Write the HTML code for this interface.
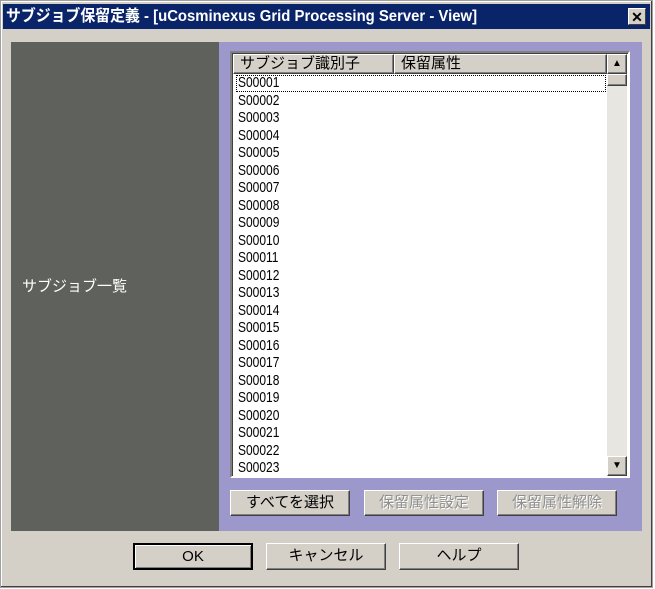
<!DOCTYPE html>
<html><head><meta charset="utf-8"><style>
*{box-sizing:border-box;margin:0;padding:0}
body{width:655px;height:589px;background:#fff;font-family:"Liberation Sans","Noto Sans CJK JP",sans-serif;position:relative;overflow:hidden}
.abs{position:absolute}
.win{left:0;top:0;width:653px;height:588px;background:#d4d0c8;border:1px solid #a0a0a0;box-shadow:inset -1px -1px #404040,inset 1px 1px #fff}
.title{left:3px;top:4px;width:647px;height:25px;background:#0a246a;color:#fff;font-weight:bold;font-size:16px;line-height:25px;padding-left:3px;white-space:nowrap}
.tt{display:inline-block;transform:scaleX(.93);transform-origin:left}
.x{right:4px;top:4px;width:18px;height:17px;background:#d4d0c8;color:#000;font-size:14px;line-height:16px;text-align:center;border:1px solid;border-color:#fff #404040 #404040 #fff}
.btn{background:#d4d0c8;border:1px solid;border-color:#fff #404040 #404040 #fff;box-shadow:inset -1px -1px #808080;font-size:15px;text-align:center;color:#000}
.dis{color:#909090;text-shadow:1px 1px #fff}
.row{position:absolute;left:6px;font-size:15px;height:17px;line-height:17px;transform:scaleX(.8);transform-origin:left}
</style></head><body>
<div class="abs win"></div>
<div class="abs title"><span class="tt">サブジョブ保留定義 - [uCosminexus Grid Processing Server - View]</span><div class="abs x">✕</div></div>
<div class="abs" style="left:11px;top:42px;width:208px;height:489px;background:#5f615c"></div>
<div class="abs" style="left:22px;top:275px;color:#fff;font-size:15px">サブジョブ一覧</div>
<div class="abs" style="left:219px;top:42px;width:423px;height:489px;background:#9c98cc"></div>
<div class="abs" style="left:230px;top:51px;width:400px;height:427px;background:#fff;border:2px solid;border-color:#808080 #fff #fff #808080;box-shadow:inset 1px 1px #404040;overflow:hidden">
 <div class="abs btn" style="left:1px;top:1px;width:161px;height:20px;text-align:left;padding-left:6px;line-height:18px">サブジョブ識別子</div>
 <div class="abs btn" style="left:162px;top:1px;width:213px;height:20px;text-align:left;padding-left:6px;line-height:18px">保留属性</div>
 <div class="abs" style="left:375px;top:1px;width:20px;height:423px;background:#e8e6e0"></div>
 <div class="abs btn" style="left:375px;top:1px;width:20px;height:20px;font-size:10px;line-height:18px">▲</div>
 <div class="abs btn" style="left:375px;top:21px;width:20px;height:12px"></div>
 <div class="abs btn" style="left:375px;top:403px;width:20px;height:20px;font-size:10px;line-height:18px">▼</div>
 <div class="abs" style="left:4px;top:22px;width:370px;height:17px;border:1px dotted #000"></div>
 <div class="row" style="top:21px">S00001</div>
 <div class="row" style="top:38.5px">S00002</div>
 <div class="row" style="top:56px">S00003</div>
 <div class="row" style="top:73.5px">S00004</div>
 <div class="row" style="top:91px">S00005</div>
 <div class="row" style="top:108.5px">S00006</div>
 <div class="row" style="top:126px">S00007</div>
 <div class="row" style="top:143.5px">S00008</div>
 <div class="row" style="top:161px">S00009</div>
 <div class="row" style="top:178.5px">S00010</div>
 <div class="row" style="top:196px">S00011</div>
 <div class="row" style="top:213.5px">S00012</div>
 <div class="row" style="top:231px">S00013</div>
 <div class="row" style="top:248.5px">S00014</div>
 <div class="row" style="top:266px">S00015</div>
 <div class="row" style="top:283.5px">S00016</div>
 <div class="row" style="top:301px">S00017</div>
 <div class="row" style="top:318.5px">S00018</div>
 <div class="row" style="top:336px">S00019</div>
 <div class="row" style="top:353.5px">S00020</div>
 <div class="row" style="top:371px">S00021</div>
 <div class="row" style="top:388.5px">S00022</div>
 <div class="row" style="top:406px">S00023</div>
</div>
<div class="abs btn" style="left:230px;top:490px;width:120px;height:26px;line-height:24px">すべてを選択</div>
<div class="abs btn dis" style="left:364px;top:490px;width:120px;height:26px;line-height:24px">保留属性設定</div>
<div class="abs btn dis" style="left:497px;top:490px;width:120px;height:26px;line-height:24px">保留属性解除</div>
<div class="abs btn" style="left:133px;top:543px;width:120px;height:27px;line-height:23px;border:2px solid #000;box-shadow:inset 1px 1px #fff,inset -1px -1px #808080">OK</div>
<div class="abs btn" style="left:266px;top:543px;width:120px;height:27px;line-height:24px">キャンセル</div>
<div class="abs btn" style="left:399px;top:543px;width:120px;height:27px;line-height:24px">ヘルプ</div>
</body></html>
